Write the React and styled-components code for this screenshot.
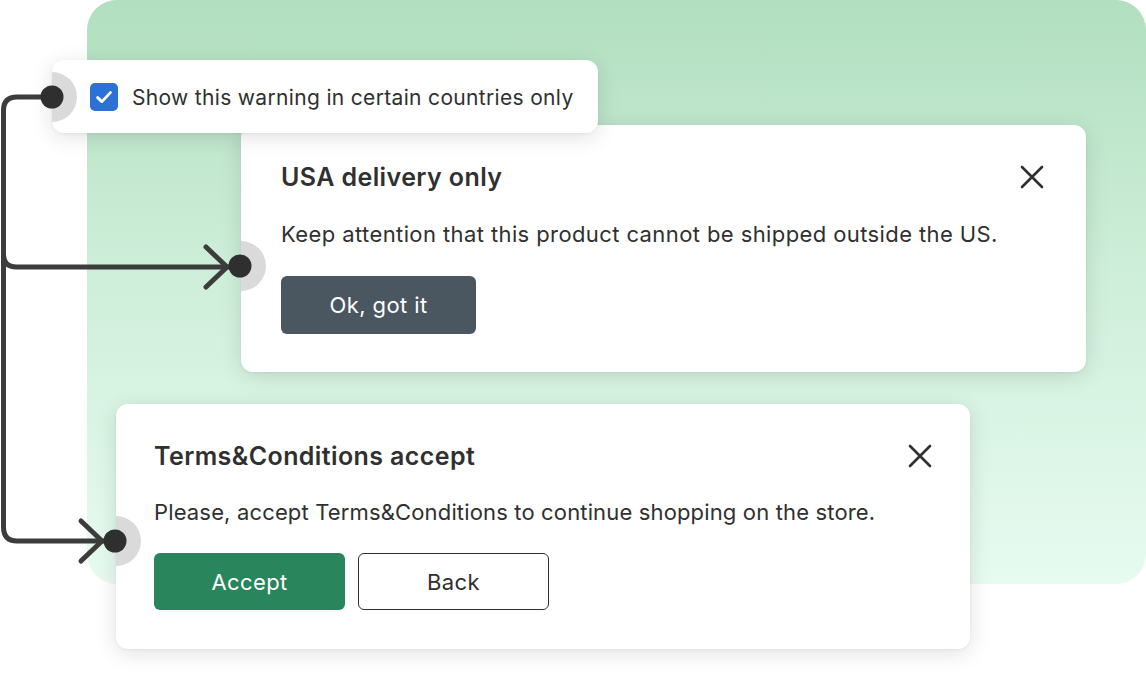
import React from "react";
import styled, { createGlobalStyle } from "styled-components";

const Global = createGlobalStyle`
  html, body { margin: 0; padding: 0; background: #ffffff; }
  body { font-family: Inter, "Noto Sans", "Liberation Sans", sans-serif; }
  * { box-sizing: border-box; }
`;

const Canvas = styled.div`
  position: relative;
  width: 1146px;
  height: 686px;
  overflow: hidden;
  background: #ffffff;
`;

const Backdrop = styled.div`
  position: absolute;
  left: 87px;
  top: 0;
  width: 1059px;
  height: 584px;
  border-radius: 30px;
  background: linear-gradient(180deg, #b1dfbf 0%, #cdeed8 45%, #e7fbf1 100%);
`;

const Card = styled.div`
  position: absolute;
  left: ${(p) => p.$x}px;
  top: ${(p) => p.$y}px;
  width: ${(p) => p.$w}px;
  height: ${(p) => p.$h}px;
  background: #ffffff;
  border-radius: 12px;
  box-shadow: 0 4px 22px rgba(0, 0, 0, 0.12), 0 1px 3px rgba(0, 0, 0, 0.05);
  overflow: hidden;
  &::before {
    content: "";
    position: absolute;
    left: 0;
    top: ${(p) => p.$anchor - 25}px;
    width: 25px;
    height: 50px;
    border-radius: 0 25px 25px 0;
    background: #dadada;
  }
`;

const DialogBody = styled.div`
  display: flex;
  flex-direction: column;
  padding: ${(p) => p.$pad};
`;

const Header = styled.div`
  display: flex;
  align-items: center;
  justify-content: space-between;
  height: 32px;
`;

const Title = styled.h2`
  margin: 0;
  font-size: 25px;
  line-height: 32px;
  font-weight: 600;
  color: #303030;
  letter-spacing: 0.4px;
`;

const CloseButton = styled.button`
  display: flex;
  align-items: center;
  justify-content: center;
  width: 30px;
  height: 30px;
  padding: 0;
  border: none;
  background: transparent;
  color: #303030;
`;

const Message = styled.p`
  margin: ${(p) => p.$mt}px 0 0;
  font-size: 22px;
  line-height: 28px;
  color: #303030;
  letter-spacing: ${(p) => p.$ls}px;
`;

const Actions = styled.div`
  display: flex;
  gap: 13px;
  margin-top: ${(p) => p.$mt}px;
`;

const Button = styled.button`
  width: ${(p) => p.$w}px;
  height: ${(p) => p.$h}px;
  border-radius: 6px;
  font-family: inherit;
  font-size: 22px;
  font-weight: 400;
  letter-spacing: 0.4px;
  cursor: pointer;
  border: ${(p) => (p.$variant === "outline" ? "1.5px solid #303030" : "none")};
  background: ${(p) =>
    p.$variant === "green" ? "#29855b" : p.$variant === "dark" ? "#4a5660" : "#ffffff"};
  color: ${(p) => (p.$variant === "outline" ? "#303030" : "#ffffff")};
`;

const CheckRow = styled.label`
  display: flex;
  align-items: center;
  gap: 14px;
  height: 100%;
  padding-left: 38px;
  padding-top: 1px;
  font-size: 21px;
  color: #303030;
  letter-spacing: 0.33px;
`;

const Box = styled.span`
  display: flex;
  align-items: center;
  justify-content: center;
  width: 28px;
  height: 28px;
  border-radius: 5px;
  background: #2c72d4;
`;

const Connectors = styled.svg`
  position: absolute;
  left: 0;
  top: 0;
  pointer-events: none;
`;

const Close = () => (
  <CloseButton aria-label="Close">
    <svg width="24" height="24" viewBox="0 0 24 24">
      <path d="M2 2 L22 22 M22 2 L2 22" stroke="#303030" strokeWidth="2.6" strokeLinecap="round" />
    </svg>
  </CloseButton>
);

const Chevron = ({ x, y }) => (
  <path
    d={`M ${x - 34} ${y - 20} L ${x - 13} ${y} L ${x - 34} ${y + 20}`}
    fill="none"
    stroke="#3c3c3c"
    strokeWidth="5"
    strokeLinecap="round"
    strokeLinejoin="round"
  />
);

export default function App() {
  return (
    <Canvas>
      <Global />
      <Backdrop />

      <Card $x={241} $y={125} $w={845} $h={247} $anchor={141}>
        <DialogBody $pad="36px 39px 0 40px">
          <Header>
            <Title>USA delivery only</Title>
            <Close />
          </Header>
          <Message $mt={27} $ls={0.4}>Keep attention that this product cannot be shipped outside the US.</Message>
          <Actions $mt={28}>
            <Button $variant="dark" $w={195} $h={58}>Ok, got it</Button>
          </Actions>
        </DialogBody>
      </Card>

      <Card $x={116} $y={404} $w={854} $h={245} $anchor={137}>
        <DialogBody $pad="36px 35px 0 38px">
          <Header>
            <Title>Terms&amp;Conditions accept</Title>
            <Close />
          </Header>
          <Message $mt={26} $ls={0.15}>Please, accept Terms&amp;Conditions to continue shopping on the store.</Message>
          <Actions $mt={27}>
            <Button $variant="green" $w={191} $h={57}>Accept</Button>
            <Button $variant="outline" $w={191} $h={57}>Back</Button>
          </Actions>
        </DialogBody>
      </Card>

      <Card $x={52} $y={60} $w={546} $h={73} $anchor={37}>
        <CheckRow>
          <Box>
            <svg width="18" height="18" viewBox="0 0 18 18">
              <path d="M2.6 9.6 L6.9 13.6 L15.4 4.6" fill="none" stroke="#fff" strokeWidth="2.8" strokeLinecap="round" strokeLinejoin="round" />
            </svg>
          </Box>
          Show this warning in certain countries only
        </CheckRow>
      </Card>

      <Connectors width="1146" height="686" viewBox="0 0 1146 686">
        <path
          d="M 52 97 H 17 Q 3.5 97 3.5 110.5 V 527 Q 3.5 541 17 541 H 115"
          fill="none"
          stroke="#3c3c3c"
          strokeWidth="5"
        />
        <path d="M 3.5 254 Q 3.5 267 16.5 267 H 240" fill="none" stroke="#3c3c3c" strokeWidth="5" />
        <Chevron x={240} y={267} />
        <Chevron x={115} y={541} />
        <circle cx="52" cy="97" r="11.5" fill="#2f2f2f" />
        <circle cx="240" cy="266" r="11.5" fill="#2f2f2f" />
        <circle cx="115" cy="541" r="11.5" fill="#2f2f2f" />
      </Connectors>
    </Canvas>
  );
}
